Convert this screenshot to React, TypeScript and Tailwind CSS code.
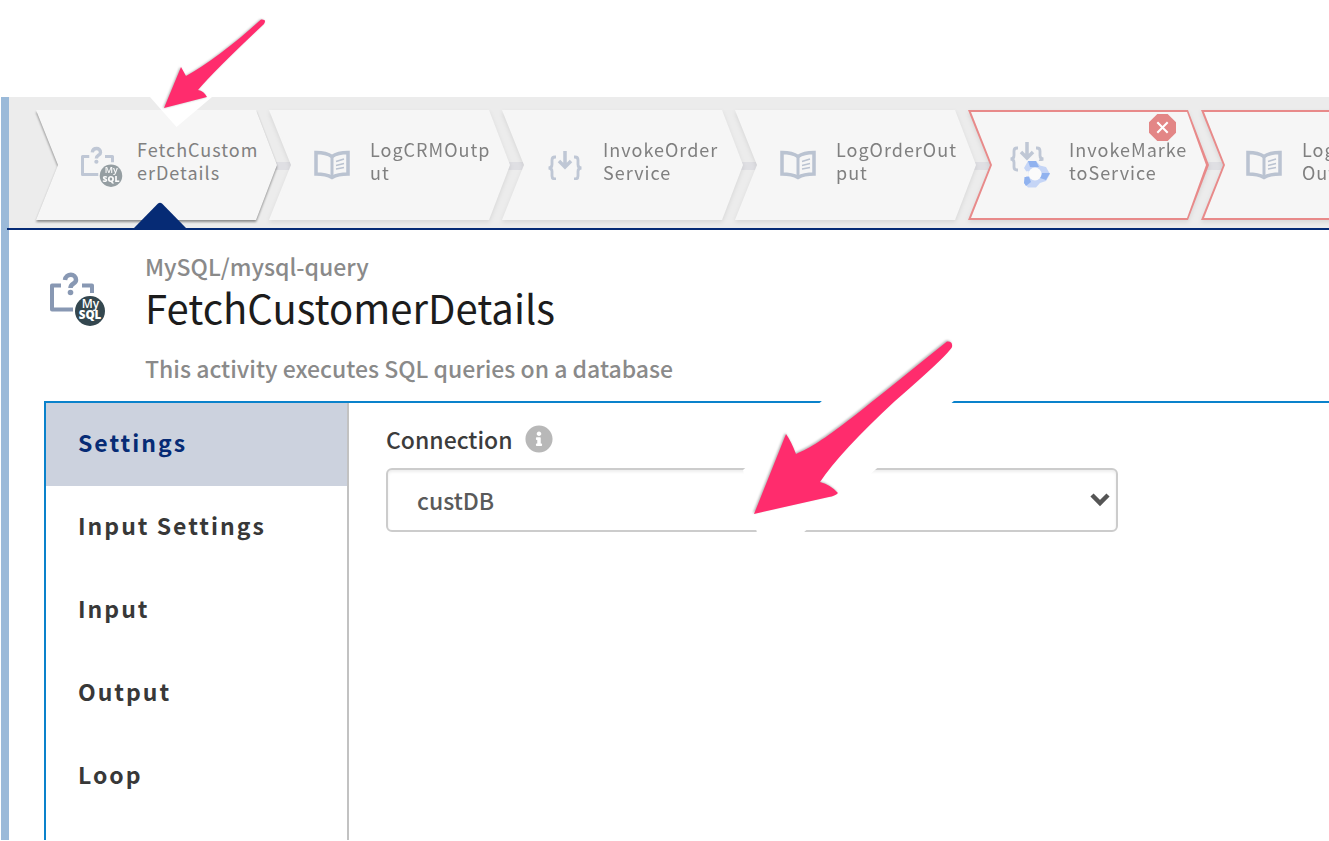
import type { ReactNode } from "react";
import { FaInfoCircle } from "react-icons/fa";

function QueryIcon({ className }: { className: string }) {
  return (
    <svg viewBox="0 0 56 55" className={className} aria-hidden="true">
      <path
        d="M11 13.500H2V37.500H23M32 13.500H42V21"
        fill="none"
        stroke="#8898b3"
        strokeWidth="4"
        strokeLinejoin="round"
      />
      <path
        d="M15 8C16 1 26 1 26 8C26 12 20.500 11.500 20.500 16"
        fill="none"
        stroke="#8898b3"
        strokeWidth="4.500"
      />
      <circle cx="20.500" cy="20.500" r="2.800" fill="#8898b3" />
      <circle cx="40" cy="39" r="15" fill="#34474f" />
      <text
        textAnchor="middle"
        fontWeight="600"
        fill="#fff"
        fontFamily="Open Sans, sans-serif"
      >
        <tspan x="40.500" y="35.500" fontSize="12">
          My
        </tspan>
        <tspan x="40" y="47" fontSize="11.500" fontWeight="800">
          SQL
        </tspan>
      </text>
    </svg>
  );
}

function BookIcon() {
  return (
    <svg viewBox="0 0 36 30" className="h-[30px] w-9" aria-hidden="true">
      <path
        d="M2 2.500C8 2.500 13 3 18 6.500C23 3 28 2.500 34 2.500V24C28 24 23 24.500 18 27.500C13 24.500 8 24 2 24Z"
        fill="none"
        stroke="#7f8fac"
        strokeWidth="3.500"
      />
      <path d="M18 6V28" stroke="#7f8fac" strokeWidth="3" />
      <path
        d="M22 11.500L30 9M22 15.500L30 13.500M22 19L30 17.500"
        stroke="#7f8fac"
        strokeWidth="1.500"
      />
    </svg>
  );
}

function InvokeArt() {
  return (
    <g fill="none" stroke="#8898b3">
      <path
        d="M9 7H8Q5 7 5 10V14.500Q5 18 1.500 18Q5 18 5 21.500V26Q5 29 8 29H9M27 7H28Q31 7 31 10V14.500Q31 18 34.500 18Q31 18 31 21.500V26Q31 29 28 29H27"
        strokeWidth="2.800"
      />
      <path d="M18 1V16M12 11L18 17L24 11" strokeWidth="3.500" />
    </g>
  );
}

function InvokeIcon() {
  return (
    <svg viewBox="0 0 36 30" className="h-[30px] w-9" aria-hidden="true">
      <InvokeArt />
    </svg>
  );
}

function InvokeServiceIcon() {
  return (
    <svg viewBox="0 0 42 48" className="-ml-1 h-12 w-[42px]" aria-hidden="true">
      <InvokeArt />
      <path d="M14 20H42V48H14Z" fill="#f6f6f6" />
      <path
        d="M19 20H27L31 24.500L37 26L41 33L37 40L31 42L27 46.500H19L15 42L16.500 36.500L19 33L15 27Z"
        fill="#93b4f5"
      />
      <g fill="#2a6fe8">
        <path d="M19 20H27L30 26H21Z" />
        <path d="M33 32L41 32L37 39L31 37Z" />
        <path d="M15.500 36L20 36L22 41L17 45L15 42Z" />
      </g>
      <circle cx="26" cy="33" r="6.500" fill="#fff" />
      <path d="M13 31.500L19.500 30L20 35L13 35Z" fill="#f6f6f6" />
    </svg>
  );
}

function ErrorBadge() {
  return (
    <svg
      viewBox="0 0 26 26"
      className="absolute top-1 left-[181px] size-[27px]"
      aria-label="Error"
    >
      <path d="M8 0H18L26 8V18L18 26H8L0 18V8Z" fill="#e38686" />
      <path d="M8 8L18 18M18 8L8 18" stroke="#fff" strokeWidth="2" />
    </svg>
  );
}

type Step = {
  id: string;
  lines: [string, string];
  icon: ReactNode;
  selected?: boolean;
  outlined?: boolean;
  error?: boolean;
};

const steps: Step[] = [
  {
    id: "fetch",
    lines: ["FetchCustom", "erDetails"],
    icon: <QueryIcon className="mt-1 h-[42px] w-[42px]" />,
    selected: true,
  },
  { id: "log-crm", lines: ["LogCRMOutp", "ut"], icon: <BookIcon /> },
  { id: "invoke-order", lines: ["InvokeOrder", "Service"], icon: <InvokeIcon /> },
  { id: "log-order", lines: ["LogOrderOut", "put"], icon: <BookIcon /> },
  {
    id: "invoke-marketo",
    lines: ["InvokeMarke", "toService"],
    icon: <InvokeServiceIcon />,
    outlined: true,
    error: true,
  },
  { id: "log-next", lines: ["Log", "Out"], icon: <BookIcon />, outlined: true },
];

function StepTile({ step }: { step: Step }) {
  return (
    <li className="relative -mr-2 w-[241px] shrink-0">
      <span className="absolute top-[52px] left-[230px] h-2 w-7 bg-[#dfdfe3]" />
      <div
        className={
          step.selected
            ? "drop-shadow-[0_2px_1px_rgba(0,0,0,0.4)]"
            : "drop-shadow-[0_2px_2px_rgba(0,0,0,0.09)]"
        }
      >
        <div
          className={`p-0.5 [clip-path:polygon(0_0,220px_0,241px_50%,220px_100%,0_100%,22px_50%)] ${
            step.outlined ? "bg-[#e88a8a]" : "bg-[#f6f6f6]"
          }`}
        >
          <button
            type="button"
            className="flex h-[106px] w-full items-center bg-[#f6f6f6] pl-[43px] text-left [clip-path:polygon(1px_0,217px_0,236px_50%,217px_100%,1px_100%,22px_50%)]"
          >
            <span className="flex w-14 shrink-0 opacity-50">{step.icon}</span>
            <span className="block pb-2 text-[18px] leading-[23px] tracking-[1px] whitespace-nowrap text-[#808080]">
              {step.lines[0]}
              <br />
              {step.lines[1]}
            </span>
          </button>
        </div>
      </div>
      {step.error && <ErrorBadge />}
      {step.selected && (
        <svg
          viewBox="0 0 52 26"
          className="absolute -bottom-2 left-[98px] h-[26px] w-[52px]"
          aria-hidden="true"
        >
          <path d="M0 26L24 1.500Q26 0 28 1.500L52 26Z" fill="#062b75" />
        </svg>
      )}
    </li>
  );
}

const tabs = ["Settings", "Input Settings", "Input", "Output", "Loop"];

export default function App() {
  return (
    <div className="relative flex min-h-screen flex-col overflow-hidden bg-white pt-[97px] pb-px font-['Noto_Sans_CJK_SC','Noto_Sans',sans-serif]">
      <div className="ml-px flex flex-1 flex-col border-l-8 border-[#9bbad9]">
        <nav aria-label="Activities" className="overflow-hidden bg-[#ececec]">
          <ol className="flex pt-[13px] pb-2 pl-[27px]">
            {steps.map((step) => (
              <StepTile key={step.id} step={step} />
            ))}
          </ol>
        </nav>
        <div className="-ml-0.5 h-0.5 bg-[#062b75]" />

        <header className="flex pt-5 pb-[17px] pl-[41px]">
          <QueryIcon className="mt-[22px] h-[55px] w-14 shrink-0" />
          <div className="ml-[39px]">
            <p className="text-[23px] leading-8 font-medium text-[#8a8a8a]">MySQL/mysql-query</p>
            <h1 className="text-[40px] leading-[50px] text-[#1c1c1c]">FetchCustomerDetails</h1>
            <p className="mt-5 text-[23px] leading-8 font-medium text-[#8a8a8a]">
              This activity executes SQL queries on a database
            </p>
          </div>
        </header>

        <main className="ml-[35px] flex flex-1 border-t-2 border-l-2 border-[#0a82cb]">
          <div role="tablist" className="w-[303px] shrink-0 border-r-2 border-[#c2c2c2]">
            {tabs.map((tab, i) => (
              <button
                key={tab}
                type="button"
                role="tab"
                aria-selected={i === 0}
                className={`block h-[83px] w-full pb-1 pl-8 text-left text-[23px] font-bold tracking-[2px] ${
                  i === 0 ? "bg-[#ccd2de] text-[#062b75]" : "text-[#383838]"
                }`}
              >
                {tab}
              </button>
            ))}
          </div>
          <section className="flex-1 pt-5 pr-6 pl-[37px]">
            <div className="flex items-center gap-3">
              <label
                htmlFor="connection"
                className="text-[23px] leading-8 font-medium text-[#3c3c3c]"
              >
                Connection
              </label>
              <FaInfoCircle className="size-7 text-[#b8b8b8]" />
            </div>
            <div className="relative mt-[13px] w-full max-w-[732px]">
              <select
                id="connection"
                className="h-16 w-full appearance-none rounded-md border-2 border-[#ccc] bg-white pl-[29px] text-[23px] font-medium text-[#5a5a5a] shadow-[inset_0_2px_3px_rgba(0,0,0,0.07)]"
              >
                <option>custDB</option>
              </select>
              <svg
                viewBox="0 0 20 14"
                className="pointer-events-none absolute top-[25px] right-2 h-[14px] w-5"
                aria-hidden="true"
              >
                <path d="M2 2L10 10L18 2" fill="none" stroke="#555" strokeWidth="4.500" />
              </svg>
            </div>
          </section>
        </main>
      </div>

      <svg
        viewBox="0 0 120 115"
        className="pointer-events-none absolute top-[15px] left-[148px] h-[115px] w-[120px]"
        aria-hidden="true"
      >
        <path d="M2 82L28.500 112L64 82L90 40L40 40Z" fill="#fff" />
        <path
          d="M16 93L33 52L38 61C58 50 84 31 113 4.500Q119 4 116 9Q66 56 50 75Q56 76 59 82Z"
          fill="#ff2c6d"
          className="drop-shadow-[-1px_0_1px_rgba(0,0,0,0.3)]"
        />
      </svg>
      <svg
        viewBox="0 0 230 220"
        className="pointer-events-none absolute top-[330px] left-[735px] h-[220px] w-[230px]"
        aria-hidden="true"
      >
        <path d="M88 70L8 140L22 203H68L140 140L220 70Z" fill="#fff" />
        <path
          d="M19 184L51 104Q56 111 61 124C90 112 120 85 212 11.500Q218 11 217 17Q213 25 160 71Q105 122 85 152Q96 155 103 163Q100 166 94 167Z"
          fill="#ff2c6d"
          className="drop-shadow-[-1px_-1px_1px_rgba(0,0,0,0.3)]"
        />
      </svg>
    </div>
  );
}
